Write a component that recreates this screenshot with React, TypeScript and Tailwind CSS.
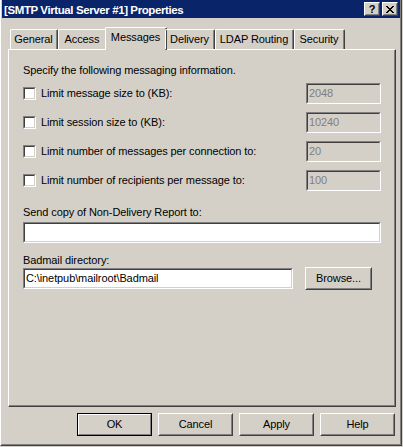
import type { ReactNode } from 'react'

type Tab = { label: string; width: string; selected?: boolean }

const tabs: Tab[] = [
  { label: 'General', width: 'w-[48px]' },
  { label: 'Access', width: 'w-[49px]' },
  { label: 'Messages', width: 'w-[62px]', selected: true },
  { label: 'Delivery', width: 'w-[50px]' },
  { label: 'LDAP Routing', width: 'w-[79px]' },
  { label: 'Security', width: 'w-[51px]' },
]

const limits = [
  { label: 'Limit message size to (KB):', value: '2048' },
  { label: 'Limit session size to (KB):', value: '10240' },
  { label: 'Limit number of messages per connection to:', value: '20' },
  { label: 'Limit number of recipients per message to:', value: '100' },
]

// classic 3d bevels
function Raised({ className = '', isDefault = false, children }: { className?: string; isDefault?: boolean; children?: ReactNode }) {
  if (isDefault) {
    return (
      <div className={`border border-black ${className}`}>
        <div className="h-full border border-t-white border-l-white border-r-[#808080] border-b-[#808080] flex items-center justify-center">
          {children}
        </div>
      </div>
    )
  }
  return (
    <div className={`border border-t-white border-l-white border-r-[#404040] border-b-[#404040] ${className}`}>
      <div className="h-full border border-t-[#D4D0C8] border-l-[#D4D0C8] border-r-[#808080] border-b-[#808080] flex items-center justify-center">
        {children}
      </div>
    </div>
  )
}

function Sunken({ className = '', inner = '', children }: { className?: string; inner?: string; children?: ReactNode }) {
  return (
    <div className={`border border-t-[#808080] border-l-[#808080] border-r-white border-b-white ${className}`}>
      <div className={`h-full border border-t-[#404040] border-l-[#404040] border-r-[#D4D0C8] border-b-[#D4D0C8] ${inner}`}>
        {children}
      </div>
    </div>
  )
}

function CloseGlyph() {
  const px = [
    [0, 0], [1, 0], [6, 0], [7, 0],
    [1, 1], [2, 1], [5, 1], [6, 1],
    [2, 2], [3, 2], [4, 2], [5, 2],
    [3, 3], [4, 3],
    [2, 4], [3, 4], [4, 4], [5, 4],
    [1, 5], [2, 5], [5, 5], [6, 5],
    [0, 6], [1, 6], [6, 6], [7, 6],
  ]
  return (
    <svg width="8" height="7" viewBox="0 0 8 7" shapeRendering="crispEdges">
      {px.map(([x, y]) => <rect key={`${x}-${y}`} x={x} y={y} width="1" height="1" fill="#000" />)}
    </svg>
  )
}

export default function App() {
  return (
    <div className="w-[403px] h-[447px] bg-[#D4D0C8] text-black text-[11px] leading-[13px] tracking-[-0.1px] font-['Liberation_Sans',Arial,sans-serif] select-none">
      <div className="w-[402px] h-[446px] border-l border-l-white border-r border-r-[#404040] border-b border-b-[#404040]">
        <div className="h-full flex flex-col border-l border-l-[#D4D0C8] border-r border-r-[#808080] border-b border-b-[#808080]">
          {/* title bar */}
          <div className="h-[18px] bg-[#0A246A] flex items-center justify-between pl-[2px] pr-[2px]">
            <span className="text-white font-bold text-[11.5px] tracking-[-0.4px] pt-[2px] whitespace-nowrap">[SMTP Virtual Server #1] Properties</span>
            <div className="flex gap-[2px]">
              <Raised className="w-[16px] h-[14px] bg-[#D4D0C8]">
                <span className="font-bold text-[11px] leading-[11px]">?</span>
              </Raised>
              <Raised className="w-[16px] h-[14px] bg-[#D4D0C8]">
                <CloseGlyph />
              </Raised>
            </div>
          </div>

          <div className="flex flex-col pl-[6px] pr-[4px] pt-[9px]">
            {/* tabs */}
            <div className="relative z-10 flex items-start h-[22px] pl-[2px]">
              {tabs.map(t =>
                t.selected ? (
                  <div
                    key={t.label}
                    className={`${t.width} -mx-[2px] h-[23px] bg-[#D4D0C8] border-t border-l border-white border-r border-r-[#404040] rounded-tl-[2px] rounded-tr-[2px]`}
                  >
                    <div className="h-full border-r border-r-[#808080] pt-[3px] text-center whitespace-nowrap">{t.label}</div>
                  </div>
                ) : (
                  <div
                    key={t.label}
                    className={`${t.width} mt-[2px] h-[20px] border-t border-l border-white border-r border-r-[#404040] rounded-tl-[2px] rounded-tr-[2px]`}
                  >
                    <div className="h-full border-r border-r-[#808080] pt-[3px] text-center whitespace-nowrap">{t.label}</div>
                  </div>
                )
              )}
            </div>

            {/* tab panel */}
            <div className="h-[358px] border-t border-l border-white border-r border-b border-r-[#404040] border-b-[#404040]">
              <div className="h-full flex flex-col border-r border-b border-[#808080] pl-[14px] pr-[13px] pt-[14px]">
                <div className="whitespace-nowrap">Specify the following messaging information.</div>

                <div className="mt-[6px] flex flex-col gap-[8px]">
                  {limits.map(l => (
                    <div key={l.label} className="h-[21px] flex items-center justify-between">
                      <div className="flex items-center gap-[5px]">
                        <Sunken className="w-[13px] h-[13px]" inner="bg-white" />
                        <span className="whitespace-nowrap">{l.label}</span>
                      </div>
                      <Sunken className="w-[75px] h-[21px]" inner="bg-[#D4D0C8] text-[#808080] pl-[1px] flex items-center">
                        {l.value}
                      </Sunken>
                    </div>
                  ))}
                </div>

                <div className="mt-[15px] whitespace-nowrap">Send copy of Non-Delivery Report to:</div>
                <Sunken className="mt-[3px] h-[21px]" inner="bg-white" />

                <div className="mt-[11px] whitespace-nowrap">Badmail directory:</div>
                <div className="h-[23px] flex items-center gap-[12px]">
                  <Sunken className="w-[270px] h-[21px]" inner="bg-white pl-[1px] flex items-center">
                    <span className="whitespace-nowrap">{'C:\\inetpub\\mailroot\\Badmail'}</span>
                  </Sunken>
                  <Raised className="w-[67px] h-[23px]">Browse...</Raised>
                </div>
              </div>
            </div>

            {/* dialog buttons */}
            <div className="mt-[6px] h-[23px] flex justify-end gap-[6px] pr-[1px]">
              <Raised isDefault className="w-[75px] h-[23px]">OK</Raised>
              <Raised className="w-[75px] h-[23px]">Cancel</Raised>
              <Raised className="w-[75px] h-[23px]">Apply</Raised>
              <Raised className="w-[75px] h-[23px]">Help</Raised>
            </div>
          </div>
        </div>
      </div>
    </div>
  )
}
